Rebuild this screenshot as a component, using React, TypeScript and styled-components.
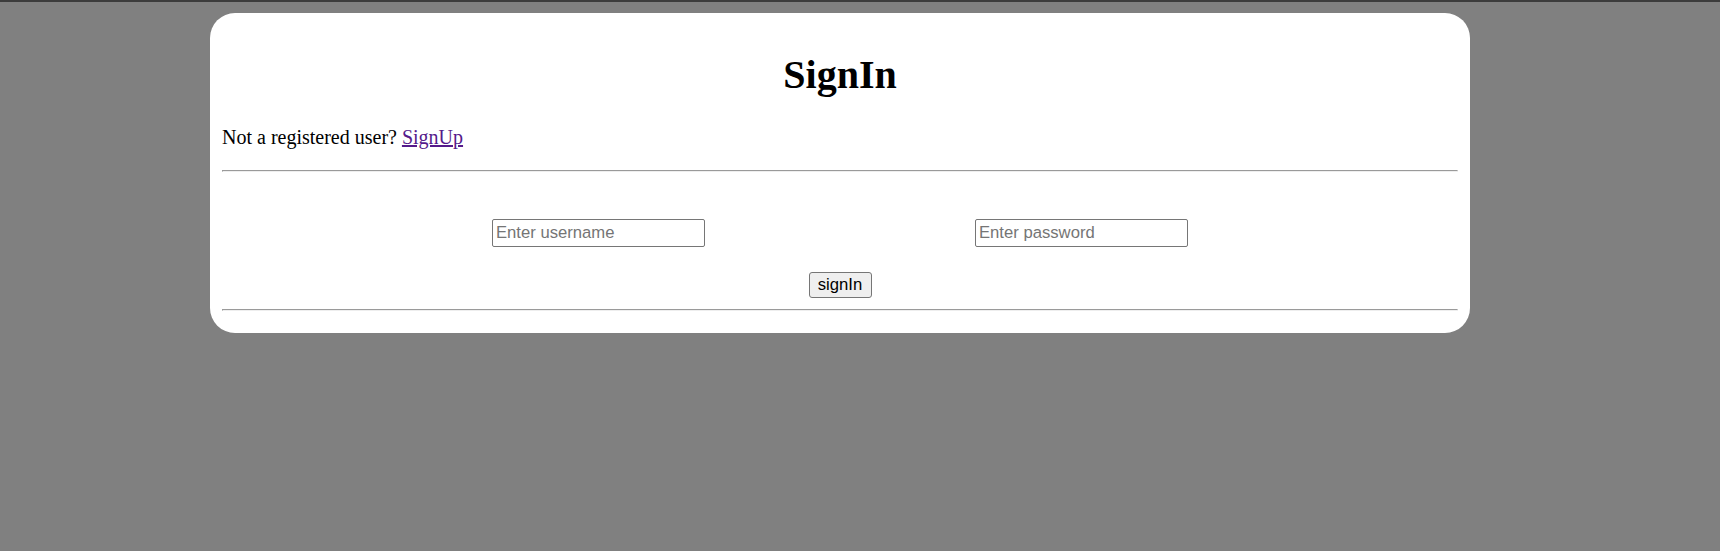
import styled, { createGlobalStyle } from 'styled-components';

const GlobalStyle = createGlobalStyle`
  html, body {
    margin: 0;
    padding: 0;
    background-color: #808080;
  }
  body {
    font-family: 'Liberation Serif', 'Times New Roman', serif;
  }
`;

const TopStrip = styled.div`
  height: 2px;
  background-color: #3c3c3c;
`;

const Page = styled.div`
  display: flex;
  padding: 11px 0 0 210px;
`;

const Card = styled.div`
  width: 1260px;
  height: 320px;
  box-sizing: border-box;
  padding: 0 12px;
  display: flex;
  flex-direction: column;
  background-color: #ffffff;
  border-radius: 25px;
  color: #000000;
`;

const Title = styled.h1`
  margin: 40px 0 0;
  font-size: 40px;
  line-height: 44px;
  font-weight: bold;
  text-align: center;
`;

const Prompt = styled.p`
  margin: 29px 0 0;
  font-size: 20px;
  line-height: 22px;
`;

const SignUpLink = styled.a`
  color: #551a8b;
  text-decoration: underline;
`;

const Rule = styled.hr<{ $gap: number }>`
  margin: ${p => p.$gap}px 0 0;
  height: 0;
  border-style: solid;
  border-width: 1px;
  border-color: #9a9a9a #eeeeee #eeeeee #9a9a9a;
`;

const FieldRow = styled.div`
  margin-top: 47px;
  display: flex;
  justify-content: space-evenly;
`;

const Field = styled.input`
  width: 213px;
  height: 28px;
  box-sizing: border-box;
  padding: 1px 3px;
  border: 1px solid #767676;
  border-radius: 2px;
  font-family: 'Liberation Sans', Arial, sans-serif;
  font-size: 16.67px;
  color: #000000;
  background: #ffffff;
  outline: none;

  &::placeholder {
    color: #757575;
  }
`;

const ActionRow = styled.div`
  margin-top: 25px;
  display: flex;
  justify-content: center;
`;

const SubmitButton = styled.button`
  width: 63px;
  height: 26px;
  box-sizing: border-box;
  padding: 0 8px;
  border: 1px solid #767676;
  border-radius: 3px;
  background-color: #efefef;
  font-family: 'Liberation Sans', Arial, sans-serif;
  font-size: 16.67px;
  color: #000000;
`;

export default function App() {
  return (
    <>
      <GlobalStyle />
      <TopStrip />
      <Page>
        <Card>
          <Title>SignIn</Title>
          <Prompt>
            Not a registered user? <SignUpLink href='#signup'>SignUp</SignUpLink>
          </Prompt>
          <Rule $gap={22} />
          <FieldRow>
            <Field type='text' placeholder='Enter username' />
            <Field type='password' placeholder='Enter password' />
          </FieldRow>
          <ActionRow>
            <SubmitButton type='button'>signIn</SubmitButton>
          </ActionRow>
          <Rule $gap={11} />
        </Card>
      </Page>
    </>
  );
}
